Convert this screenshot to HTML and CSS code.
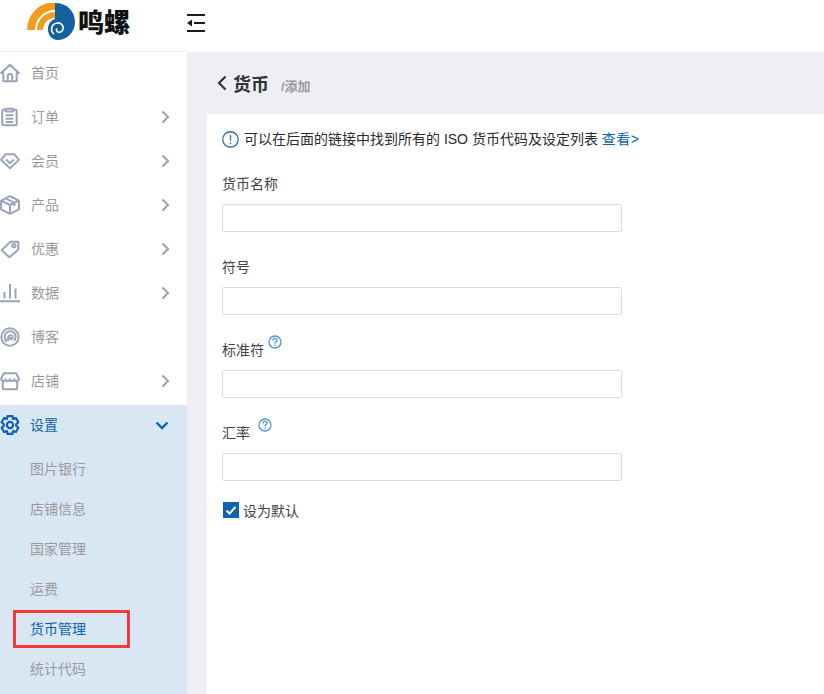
FILE: index.html
```html
<!DOCTYPE html>
<html lang="zh">
<head>
<meta charset="utf-8">
<title>货币</title>
<link rel="stylesheet" href="styles.css">
</head>
<body>
<header class="topbar">
  <div class="brand">
    <svg class="logo" width="48" height="38" viewBox="0 0 48 38">
      <path d="M4 27A24 24 0 0 1 28 3" fill="none" stroke="#f59c1f" stroke-width="8"/>
      <path d="M13 27A15 15 0 0 1 28 12" fill="none" stroke="#f59c1f" stroke-width="6"/>
      <path d="M28 0C40 0 48 8 48 19C48 30 39 37 31 37C24 37 21 31 21 26C21 21 24 17 28 16Z" fill="#14619f"/>
      <path d="M27 31C23 28 24 21 30 20C35 19 38 25 35 28C32 31 28 28 30 25.500" fill="none" stroke="#fff" stroke-width="1.600"/>
    </svg>
    <span class="brand-name">鸣螺</span>
  </div>
  <button class="collapse" type="button" aria-label="收起菜单">
    <svg width="18" height="18" viewBox="0 0 18 18"><path d="M0 1H18M7 9H18M0 17H18" stroke="#1a1a1a" stroke-width="2" fill="none"/><path d="M0 9L5 5.500V12.500Z" fill="#1a1a1a"/></svg>
  </button>
</header>
<div class="shell">
  <nav class="sidebar">
    <a class="nav-item"><svg class="nav-icon" viewBox="0 0 18 18"><path d="M1 9L9 1.500L17 9H15V16.500H3V9ZM7 16V11.500C7 9.500 11 9.500 11 11.500V16" /></svg><span class="nav-label">首页</span></a>
    <a class="nav-item"><svg class="nav-icon" viewBox="0 0 18 18"><path d="M5 2.500H3C2 2.500 2 3 2 4V15C2 16 2 16.500 3 16.500H14C15 16.500 15 16 15 15V4C15 3 15 2.500 14 2.500H12M5 1.500H12V4H5ZM5 7.500H12M5 10.500H12M5 13.500H12"/></svg><span class="nav-label">订单</span><svg class="chev" viewBox="0 0 9 14"><path d="M1.500 1.500L7 7L1.500 12.500"/></svg></a>
    <a class="nav-item"><svg class="nav-icon" viewBox="0 0 18 18"><path d="M5 3H13L17 8L9 15.500L1 8ZM5.500 7.500L9 11L12.500 7.500"/></svg><span class="nav-label">会员</span><svg class="chev" viewBox="0 0 9 14"><path d="M1.500 1.500L7 7L1.500 12.500"/></svg></a>
    <a class="nav-item"><svg class="nav-icon" viewBox="0 0 18 18"><path d="M9 1L17 5V13L9 17L1 13V5ZM1 5L9 9L17 5M9 9V17M5 3L13 7V10"/></svg><span class="nav-label">产品</span><svg class="chev" viewBox="0 0 9 14"><path d="M1.500 1.500L7 7L1.500 12.500"/></svg></a>
    <a class="nav-item"><svg class="nav-icon" viewBox="0 0 18 18"><path d="M1.500 10L9.500 2.500H16.500V9.500L8.500 16.500ZM12.500 4.500A1.500 1.500 0 1 0 12.510 4.500"/></svg><span class="nav-label">优惠</span><svg class="chev" viewBox="0 0 9 14"><path d="M1.500 1.500L7 7L1.500 12.500"/></svg></a>
    <a class="nav-item"><svg class="nav-icon" viewBox="0 0 18 18"><path d="M0 16.500H18M4 14V8M9 14V1M14 14V5"/></svg><span class="nav-label">数据</span><svg class="chev" viewBox="0 0 9 14"><path d="M1.500 1.500L7 7L1.500 12.500"/></svg></a>
    <a class="nav-item"><svg class="nav-icon" viewBox="0 0 18 18"><circle cx="9" cy="9" r="7.800"/><path d="M6.500 13A5 5 0 1 1 12.500 12.500M8 12.500C6 10 8 7 10 7.500C12 8 12 10.500 10 11L8.500 9.500"/></svg><span class="nav-label">博客</span></a>
    <a class="nav-item"><svg class="nav-icon" viewBox="0 0 18 18"><path d="M3.500 2H14.500L17 7C17 9.500 13 9.500 13 7.500C13 9.500 9 9.500 9 7.500C9 9.500 5 9.500 5 7.500C5 9.500 1 9.500 1 7ZM2.500 9.500V15C2.500 16 3 16.500 4 16.500H14C15 16.500 15.500 16 15.500 15V9.500"/></svg><span class="nav-label">店铺</span><svg class="chev" viewBox="0 0 9 14"><path d="M1.500 1.500L7 7L1.500 12.500"/></svg></a>
    <div class="nav-group">
      <a class="nav-item nav-item-open"><svg class="nav-icon" viewBox="0 0 18 18"><path d="M6.800 1H11.200L11.800 3.500L14.300 2.700L16.500 6.500L14.600 8.300V9.700L16.500 11.500L14.300 15.300L11.800 14.500L11.200 17H6.800L6.200 14.500L3.700 15.300L1.500 11.500L3.400 9.700V8.300L1.500 6.500L3.700 2.700L6.200 3.500Z"/><circle cx="9" cy="9" r="2.800"/></svg><span class="nav-label">设置</span><svg class="chev-down" viewBox="0 0 14 9"><path d="M1.500 1.500L7 7L12.500 1.500"/></svg></a>
      <a class="sub-item">图片银行</a>
      <a class="sub-item">店铺信息</a>
      <a class="sub-item">国家管理</a>
      <a class="sub-item">运费</a>
      <a class="sub-item sub-item-active"><span class="sub-text">货币管理</span><span class="highlight"></span></a>
      <a class="sub-item">统计代码</a>
    </div>
  </nav>
  <main class="main">
    <div class="page-head">
      <svg class="back" viewBox="0 0 10 16"><path d="M8.500 1.500L2 8L8.500 14.500"/></svg>
      <h1 class="page-title">货币</h1>
      <span class="crumb">/添加</span>
    </div>
    <section class="card">
      <p class="notice">
        <svg class="notice-icon" viewBox="0 0 16 16"><circle cx="8" cy="8" r="7.300"/><path d="M8 3.800V9.200M8 10.800V12.400"/></svg>
        <span>可以在后面的链接中找到所有的 ISO 货币代码及设定列表 <a class="link">查看&gt;</a></span>
      </p>
      <form class="form">
        <div class="field">
          <label class="label">货币名称</label>
          <input class="input" type="text">
        </div>
        <div class="field">
          <label class="label">符号</label>
          <input class="input" type="text">
        </div>
        <div class="field">
          <label class="label">标准符<svg class="help" viewBox="0 0 14 14"><circle cx="7" cy="7" r="6"/><path d="M5 5.500C5 2.800 9 2.800 9 5.300C9 6.800 7 6.800 7 8.500M7 9.800V11"/></svg></label>
          <input class="input" type="text">
        </div>
        <div class="field">
          <label class="label">汇率<svg class="help help-wide" viewBox="0 0 14 14"><circle cx="7" cy="7" r="6"/><path d="M5 5.500C5 2.800 9 2.800 9 5.300C9 6.800 7 6.800 7 8.500M7 9.800V11"/></svg></label>
          <input class="input" type="text">
        </div>
        <div class="check">
          <span class="check-box"><svg width="16" height="16" viewBox="0 0 16 16"><path d="M3.500 8.500L6.500 11.500L12.500 5" fill="none" stroke="#fff" stroke-width="2"/></svg></span>
          <span class="check-label">设为默认</span>
        </div>
      </form>
    </section>
  </main>
</div>
</body>
</html>
```
FILE: styles.css
```css
* { box-sizing: border-box; }
html, body { margin: 0; height: 100%; overflow: hidden; }
body {
  width: 824px;
  height: 694px;
  font-family: "Liberation Sans", "Noto Sans CJK SC", sans-serif;
  font-size: 14px;
  color: #333;
  background: #fff;
  display: flex;
  flex-direction: column;
}
.topbar {
  height: 52px;
  flex: none;
  display: flex;
  align-items: center;
  background: #fff;
}
.brand {
  width: 187px;
  height: 52px;
  padding: 3px 0 0 27px;
  display: flex;
  align-items: flex-start;
  gap: 3px;
  border-bottom: 1px solid #eeeff4;
}
.logo { flex: none; }
.brand-name {
  font-family: "Noto Sans CJK SC", sans-serif;
  font-size: 26px;
  font-weight: 900;
  line-height: 36px;
  color: #111;
}
.collapse {
  border: 0;
  padding: 0;
  background: none;
  display: flex;
  width: 18px;
  height: 18px;
  margin: -6px 0 0 0;
}
.shell { flex: 1; display: flex; min-height: 0; }
.sidebar {
  width: 187px;
  flex: none;
  margin-top: -1px;
  position: relative;
}
.nav-item {
  display: flex;
  align-items: center;
  height: 44px;
  padding-left: 0;
  color: #9a9a9a;
  font-size: 14px;
}
.nav-icon {
  width: 20px;
  height: 20px;
  flex: none;
  fill: none;
  stroke: #9aa3b8;
  stroke-width: 1.800;
  stroke-linejoin: round;
}
.nav-label { margin-left: 11px; flex: 1; line-height: 20px; padding-bottom: 1px; }
.chev {
  width: 9px;
  height: 14px;
  margin-right: 17px;
  fill: none;
  stroke: #9aa3b8;
  stroke-width: 2.200;
}
.nav-group { background: #d9e6f4; height: 289px; margin-top: 2px; }
.nav-item-open { height: 40px; color: #0e62b0; }
.nav-item-open .nav-icon { stroke: #0e62b0; stroke-width: 2; }
.nav-item-open .nav-label { margin-left: 10px; }
.chev-down {
  width: 14px;
  height: 9px;
  margin-right: 18px;
  fill: none;
  stroke: #0e62b0;
  stroke-width: 2.400;
}
.sub-item {
  display: flex;
  align-items: center;
  height: 40px;
  padding-bottom: 3px;
  padding-left: 30px;
  color: #9a9a9a;
  font-size: 14px;
  position: relative;
}
.nav-item-open + .sub-item { margin-top: 4px; }
.sub-item-active { color: #0e62b0; }
.highlight {
  position: absolute;
  left: 13px;
  top: 1px;
  width: 117px;
  height: 38px;
  border: 3px solid #f83737;
}
.main {
  flex: 1;
  min-width: 0;
  background: #eeeff4;
  padding-left: 20px;
  display: flex;
  flex-direction: column;
}
.page-head {
  height: 62px;
  flex: none;
  margin-left: -20px;
  padding-left: 30px;
  display: flex;
  align-items: center;
}
.back {
  width: 10px;
  height: 16px;
  fill: none;
  stroke: #333;
  stroke-width: 2.200;
}
.page-title {
  margin: 0 0 0 6px;
  font-size: 18px;
  font-weight: 700;
  color: #333;
}
.crumb {
  margin: 5px 0 0 12px;
  font-size: 13px;
  font-weight: 700;
  color: #9a9a9a;
}
.card {
  flex: 1;
  background: #fff;
  padding: 15px 15px 0;
}
.notice {
  margin: 0;
  height: 20px;
  display: flex;
  align-items: center;
  gap: 5px;
  font-size: 14px;
  line-height: 20px;
  color: #2a2a2a;
}
.notice-icon {
  width: 17px;
  height: 17px;
  flex: none;
  fill: none;
  stroke: #2f6f9f;
  stroke-width: 1.200;
}
.link { color: #0e62b0; letter-spacing: 0.5px; }
.form { margin-top: 25px; }
.field { height: 83px; display: flex; flex-direction: column; align-items: flex-start; }
.label {
  height: 20px;
  line-height: 20px;
  font-size: 14px;
  color: #444;
  margin-bottom: 10px;
  display: flex;
}
.help {
  width: 14px;
  height: 14px;
  margin: -5px 0 0 4px;
  fill: none;
  stroke: #4f94d4;
  stroke-width: 1.300;
}
.help-wide { margin-left: 8px; }
.input {
  width: 400px;
  height: 28px;
  border: 1px solid #dcdcdc;
  border-radius: 2px;
  background: #fff;
  padding: 0 8px;
  outline: 0;
}
.check {
  display: flex;
  align-items: center;
  gap: 4px;
  height: 20px;
  margin-top: -6px;
  padding-left: 1px;
}
.check-box {
  width: 16px;
  height: 16px;
  background: #0e62b0;
  display: flex;
}
.check-label { font-size: 14px; color: #444; }
```
